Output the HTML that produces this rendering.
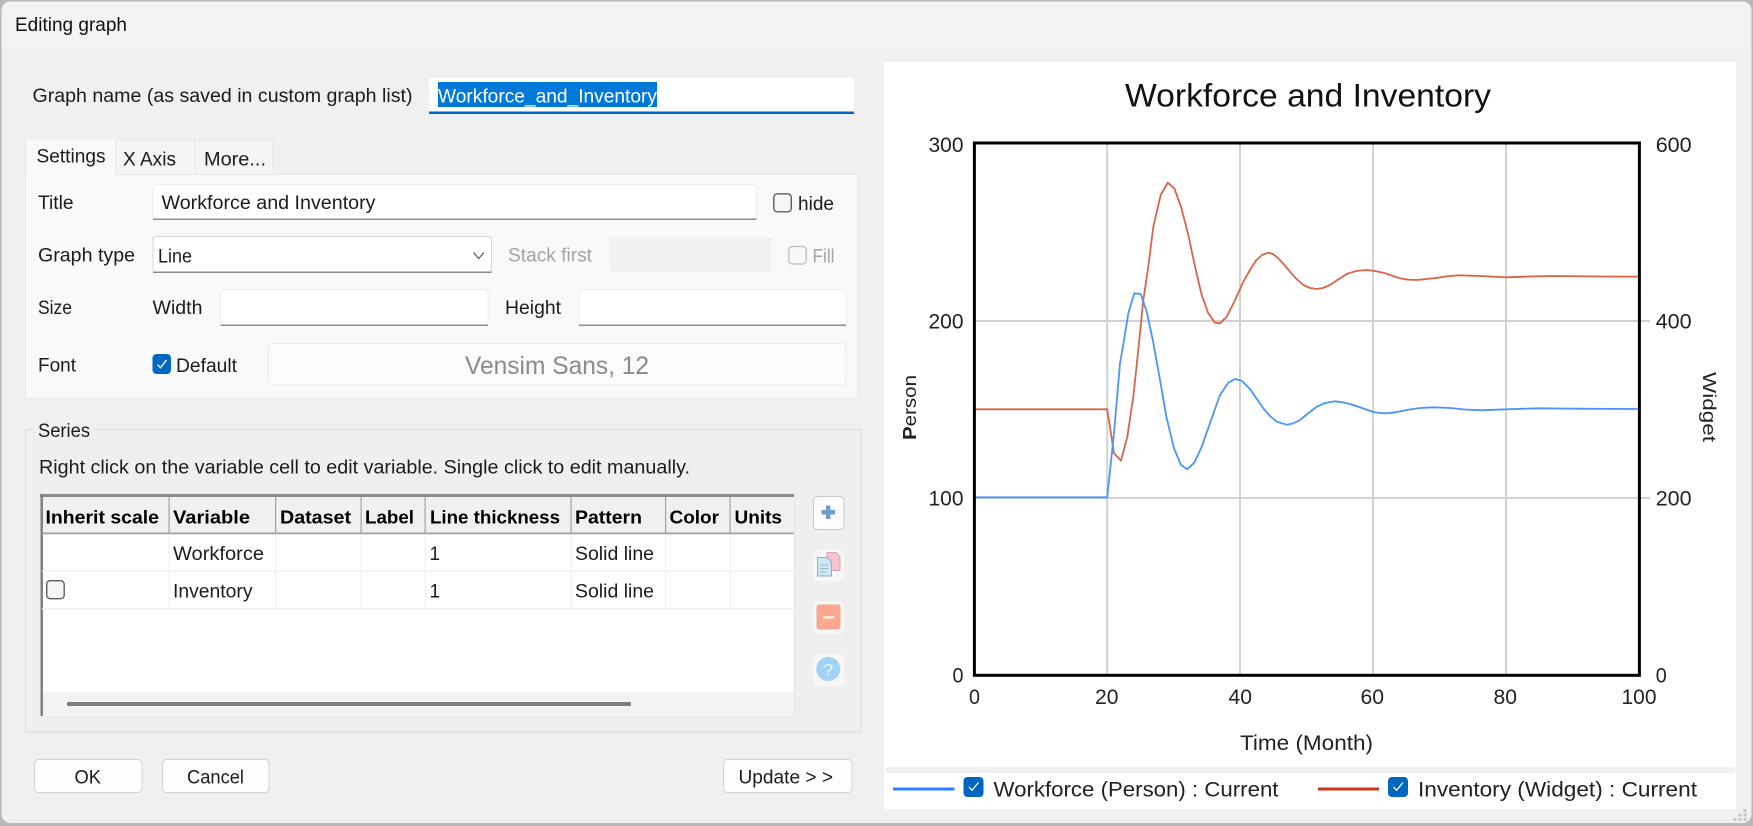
<!DOCTYPE html>
<html>
<head>
<meta charset="utf-8">
<title>Editing graph</title>
<style>
html,body{margin:0;padding:0;width:1753px;height:826px;overflow:hidden;background:#b9b9b9}
svg{display:block}
text{font-family:"Liberation Sans",sans-serif;font-size:19px;fill:#1c1c1c}
.h{font-weight:bold;fill:#000;font-size:18.5px}
.d{fill:#a3a3a3}
.c{font-size:21.5px;fill:#222}
</style>
</head>
<body>
<svg xmlns="http://www.w3.org/2000/svg" width="1753" height="826" viewBox="0 0 1753 826">
<rect x="1.500" y="1.500" width="1750" height="821.500" rx="9" fill="#f0f0f0"/>
<path d="M1.500 48V10.500a9 9 0 0 1 9-9H1742.500a9 9 0 0 1 9 9V48Z" fill="#f3f3f3"/>
<text x="15" y="31" textLength="112" lengthAdjust="spacingAndGlyphs" style="fill:#111">Editing graph</text>

<text x="32.500" y="102" textLength="380" lengthAdjust="spacingAndGlyphs">Graph name (as saved in custom graph list)</text>
<rect x="429" y="78" width="425" height="36" fill="#fff"/>
<rect x="429" y="111.500" width="425" height="2.500" fill="#0067c0"/>
<rect x="438" y="82" width="219" height="25" fill="#0078d7"/>
<text x="438" y="102.500" textLength="219" lengthAdjust="spacingAndGlyphs" style="fill:#fff">Workforce_and_Inventory</text>

<rect x="116" y="140" width="79" height="35" fill="#f4f4f4" stroke="#e9e9e9"/>
<rect x="195" y="140" width="78" height="35" fill="#f4f4f4" stroke="#e9e9e9"/>
<rect x="25.500" y="174.500" width="832" height="224" fill="#f9f9f9" stroke="#e8e8e8"/>
<rect x="25" y="138" width="91" height="37" fill="#f9f9f9"/>
<path d="M25.500 175V138.500H115.500V174" fill="none" stroke="#ececec"/>
<text x="36.500" y="162.500" textLength="69" lengthAdjust="spacingAndGlyphs">Settings</text>
<text x="123" y="165.500" textLength="53" lengthAdjust="spacingAndGlyphs">X Axis</text>
<text x="204" y="165.500" textLength="62" lengthAdjust="spacingAndGlyphs">More...</text>

<text x="38" y="209" textLength="35.500" lengthAdjust="spacingAndGlyphs">Title</text>
<rect x="153" y="184.500" width="603.500" height="35" rx="3" fill="#fff" stroke="#ececec"/>
<rect x="153" y="218.500" width="603.500" height="1.500" fill="#8d8d8d"/>
<text x="161.500" y="209" textLength="214" lengthAdjust="spacingAndGlyphs">Workforce and Inventory</text>
<rect x="773.800" y="193.800" width="17.500" height="18" rx="3.500" fill="#f6f6f6" stroke="#5e5e5e" stroke-width="1.400"/>
<text x="798" y="210" textLength="36" lengthAdjust="spacingAndGlyphs">hide</text>

<text x="38" y="261.500" textLength="97" lengthAdjust="spacingAndGlyphs">Graph type</text>
<rect x="153" y="236.500" width="338.500" height="36" rx="3" fill="#fff" stroke="#d6d6d6"/>
<rect x="153" y="271.500" width="338.500" height="1.500" fill="#8d8d8d"/>
<text x="158" y="262.500" textLength="34" lengthAdjust="spacingAndGlyphs">Line</text>
<path d="M473.500 252.500L478.700 258.500L484 252.500" fill="none" stroke="#555" stroke-width="1.200"/>
<text class="d" x="508" y="261.500" textLength="84" lengthAdjust="spacingAndGlyphs">Stack first</text>
<rect x="609.500" y="236.500" width="162.500" height="36" rx="3" fill="#f0f0f0" stroke="#f6f6f6" stroke-width="2"/>
<rect x="788.800" y="246.500" width="17.500" height="17.500" rx="3.500" fill="#f8f8f8" stroke="#bcbcbc" stroke-width="1.300"/>
<text class="d" x="812.500" y="262.500" textLength="22" lengthAdjust="spacingAndGlyphs">Fill</text>

<text x="38" y="314" textLength="34" lengthAdjust="spacingAndGlyphs">Size</text>
<text x="152.500" y="314" textLength="50" lengthAdjust="spacingAndGlyphs">Width</text>
<rect x="220.500" y="289.500" width="267.500" height="36" rx="3" fill="#fff" stroke="#ececec"/>
<rect x="220.500" y="324.500" width="267.500" height="1.500" fill="#8d8d8d"/>
<text x="505" y="314" textLength="56" lengthAdjust="spacingAndGlyphs">Height</text>
<rect x="579" y="289.500" width="267" height="36" rx="3" fill="#fff" stroke="#ececec"/>
<rect x="579" y="324.500" width="267" height="1.500" fill="#8d8d8d"/>

<text x="38" y="371.500" textLength="38" lengthAdjust="spacingAndGlyphs">Font</text>
<rect x="152.500" y="354" width="18.500" height="20" rx="4" fill="#0067c0"/>
<path d="M157.500 364.500L160.500 367.800L166.500 360" fill="none" stroke="#fff" stroke-width="1.300"/>
<text x="176" y="372" textLength="61" lengthAdjust="spacingAndGlyphs">Default</text>
<rect x="268.500" y="343.500" width="577.500" height="41.500" rx="4" fill="#fbfbfb" stroke="#ebebeb"/>
<text x="465" y="374" textLength="184" lengthAdjust="spacingAndGlyphs" style="font-size:25px;fill:#8a8a8a">Vensim Sans, 12</text>

<rect x="25.500" y="429.500" width="835.500" height="302.500" fill="#efefef" stroke="#dcdcdc"/>
<rect x="34" y="425" width="60" height="10" fill="#f0f0f0"/>
<text x="38" y="437" textLength="52" lengthAdjust="spacingAndGlyphs">Series</text>
<text x="39" y="473.500" textLength="651" lengthAdjust="spacingAndGlyphs">Right click on the variable cell to edit variable. Single click to edit manually.</text>

<rect x="40" y="494" width="754.500" height="223" fill="#f3f3f3" stroke="#e6e6e6"/>
<rect x="42" y="497" width="751.500" height="37" fill="#f0f0f0"/>
<rect x="42" y="534" width="751.500" height="158" fill="#fff"/>
<rect x="40" y="494" width="754" height="3" fill="#8b8b8b"/>
<rect x="40.500" y="494" width="2.500" height="222" fill="#828282"/>
<rect x="42" y="532.500" width="751.500" height="1.800" fill="#a2a2a2"/>
<g fill="#a2a2a2">
<rect x="168.500" y="497" width="1.200" height="36"/><rect x="275" y="497" width="1.200" height="36"/><rect x="360.500" y="497" width="1.200" height="36"/><rect x="424.500" y="497" width="1.200" height="36"/><rect x="570.500" y="497" width="1.200" height="36"/><rect x="665" y="497" width="1.200" height="36"/><rect x="729.500" y="497" width="1.200" height="36"/>
</g>
<g fill="#f0f0f0">
<rect x="168.500" y="534" width="1.200" height="75"/><rect x="275" y="534" width="1.200" height="75"/><rect x="360.500" y="534" width="1.200" height="75"/><rect x="424.500" y="534" width="1.200" height="75"/><rect x="570.500" y="534" width="1.200" height="75"/><rect x="665" y="534" width="1.200" height="75"/><rect x="729.500" y="534" width="1.200" height="75"/>
<rect x="42" y="570.500" width="751.500" height="1.500"/><rect x="42" y="608" width="751.500" height="1.500"/>
</g>
<text class="h" x="45.500" y="523.500" textLength="113.500" lengthAdjust="spacingAndGlyphs">Inherit scale</text>
<text class="h" x="173" y="523.500" textLength="77" lengthAdjust="spacingAndGlyphs">Variable</text>
<text class="h" x="280" y="523.500" textLength="71" lengthAdjust="spacingAndGlyphs">Dataset</text>
<text class="h" x="365" y="523.500" textLength="49" lengthAdjust="spacingAndGlyphs">Label</text>
<text class="h" x="430" y="523.500" textLength="130" lengthAdjust="spacingAndGlyphs">Line thickness</text>
<text class="h" x="575" y="523.500" textLength="67" lengthAdjust="spacingAndGlyphs">Pattern</text>
<text class="h" x="669.500" y="523.500" textLength="49.500" lengthAdjust="spacingAndGlyphs">Color</text>
<text class="h" x="734.500" y="523.500" textLength="47.500" lengthAdjust="spacingAndGlyphs">Units</text>
<text x="173" y="560" textLength="91" lengthAdjust="spacingAndGlyphs">Workforce</text>
<text x="429.500" y="560">1</text>
<text x="575" y="560" textLength="79" lengthAdjust="spacingAndGlyphs">Solid line</text>
<rect x="46.700" y="580.700" width="17.500" height="18" rx="3.500" fill="#f6f6f6" stroke="#5e5e5e" stroke-width="1.400"/>
<text x="173" y="597.500" textLength="79.500" lengthAdjust="spacingAndGlyphs">Inventory</text>
<text x="429.500" y="597.500">1</text>
<text x="575" y="597.500" textLength="79" lengthAdjust="spacingAndGlyphs">Solid line</text>
<rect x="67" y="702" width="564" height="4" rx="1" fill="#7d7d7d"/>

<rect x="813.500" y="496.500" width="30.500" height="33" rx="4" fill="#fdfdfd" stroke="#c9c9c9"/>
<path d="M828.200 505.500V519M821.500 512.300H835" fill="none" stroke="#6f9dd3" stroke-width="4.500"/>
<rect x="813.500" y="549.500" width="30.500" height="32" rx="4" fill="#f7f7f7"/>
<path d="M827 552.500H836L840 557V570.500H827Z" fill="#f7c3cf" stroke="#d9a5b3"/>
<path d="M817.500 557.500H827L831.500 562V576H817.500Z" fill="#c9e8f3" stroke="#8fb2bf"/>
<path d="M820 565H828M820 568.500H828M820 572H826" stroke="#9dbcc9" stroke-width="1"/>
<rect x="813.500" y="602" width="30.500" height="31.500" rx="4" fill="#f7f7f7"/>
<rect x="817" y="605" width="23" height="24" rx="2" fill="#ffa78c" stroke="#e9a995"/>
<rect x="823" y="616" width="11.500" height="2.800" fill="#ffe6dc"/>
<rect x="813.500" y="654" width="30.500" height="32" rx="4" fill="#f7f7f7"/>
<circle cx="828.300" cy="669" r="12" fill="#a2d2f3"/>
<text x="828.300" y="675.500" text-anchor="middle" style="font-size:17px;fill:#eef8ff">?</text>

<rect x="34.500" y="759.500" width="107.500" height="33" rx="4" fill="#fdfdfd" stroke="#d2d2d2"/>
<rect x="162.500" y="759.500" width="106.500" height="33" rx="4" fill="#fdfdfd" stroke="#d2d2d2"/>
<rect x="723.500" y="759.500" width="128.500" height="33" rx="4" fill="#fdfdfd" stroke="#d2d2d2"/>
<text x="74.500" y="783.500" textLength="26.500" lengthAdjust="spacingAndGlyphs">OK</text>
<text x="187" y="783.500" textLength="57" lengthAdjust="spacingAndGlyphs">Cancel</text>
<text x="738.500" y="783.500" textLength="94.500" lengthAdjust="spacingAndGlyphs">Update &gt; &gt;</text>

<rect x="884" y="62" width="852" height="747" fill="#fff"/>
<rect x="885" y="767" width="850" height="6" fill="#f0f0f0"/>
<text x="1125" y="106.700" textLength="366" lengthAdjust="spacingAndGlyphs" style="font-size:32.500px;fill:#111">Workforce and Inventory</text>

<g stroke="#d2d2d2" stroke-width="2" fill="none">
<path d="M1107.200 143V675M1240 143V675M1373 143V675M1506 143V675"/>
<path d="M974 321H1650M974 498H1650"/>
</g>
<polyline fill="none" stroke="#d9644a" stroke-width="1.800" stroke-linejoin="round" points="974.500,409.300 1107.200,409.300 1114,453.300 1121,460.700 1127.300,436.700 1133.300,396.700 1136.700,365 1139.300,340 1143.300,300 1148.300,266.700 1153.300,226.700 1160.700,195 1167.700,182.700 1174.300,188.300 1181,206.700 1188.300,235 1195,266.700 1201.700,295 1208.300,313.300 1215,322.700 1220,323.300 1226.700,316.700 1234.300,301.700 1243.300,281.700 1250,270 1256,260.500 1262,255 1268.300,252.700 1273,254 1278.300,258.300 1284,264.500 1290,271.700 1296,278.500 1303.300,285 1310,288 1316.700,289 1323,288 1330,285 1338,279.500 1346.700,274 1356,271 1366.700,270 1375,271 1383.300,272.700 1400,278.300 1408,279.600 1416.700,280 1433.300,278.300 1450,276 1459,275.300 1480,276 1506.400,277.300 1530,276.500 1553.700,276 1600,276.500 1640,276.700"/>
<polyline fill="none" stroke="#4a94fb" stroke-width="1.800" stroke-linejoin="round" points="974.500,497.300 1107.200,497.300 1114,433.300 1120,363.300 1124,340 1128.300,313.300 1134.300,293.300 1140.700,294 1146.700,311.700 1152.800,340 1160,380 1166.700,418.300 1174,448.300 1181,465 1187.300,469.300 1194.300,462.700 1201.700,446.700 1211.700,418.300 1220,395 1228.300,382.700 1235,379 1241.700,380.700 1250,389 1263.300,408.300 1270,416 1276.700,421.700 1286.700,424.700 1293,423.500 1300,420 1308,413.500 1316.700,406.700 1325,403 1335,401.300 1344,402.500 1353.300,405 1373.300,412 1380,413 1386.700,413.300 1396,412.200 1406.700,410 1420,408 1434,407.300 1450,408 1465,409.500 1481,410.300 1510,409.200 1537,408.300 1590,408.800 1640,409"/>
<rect x="974.400" y="143" width="665" height="532.300" fill="none" stroke="#000" stroke-width="3"/>

<g class="n">
<text class="c" x="928.500" y="152" textLength="35" lengthAdjust="spacingAndGlyphs">300</text>
<text class="c" x="928.500" y="328.500" textLength="35" lengthAdjust="spacingAndGlyphs">200</text>
<text class="c" x="928.500" y="505.700" textLength="35" lengthAdjust="spacingAndGlyphs">100</text>
<text class="c" x="952.500" y="682.500" textLength="11" lengthAdjust="spacingAndGlyphs">0</text>
<text class="c" x="1655.700" y="152" textLength="36" lengthAdjust="spacingAndGlyphs">600</text>
<text class="c" x="1655.700" y="328.500" textLength="36" lengthAdjust="spacingAndGlyphs">400</text>
<text class="c" x="1655.700" y="505.700" textLength="36" lengthAdjust="spacingAndGlyphs">200</text>
<text class="c" x="1655.700" y="682.500" textLength="11" lengthAdjust="spacingAndGlyphs">0</text>
<text class="c" x="969" y="704" textLength="11" lengthAdjust="spacingAndGlyphs">0</text>
<text class="c" x="1095" y="704" textLength="23.500" lengthAdjust="spacingAndGlyphs">20</text>
<text class="c" x="1228.500" y="704" textLength="23.500" lengthAdjust="spacingAndGlyphs">40</text>
<text class="c" x="1360.500" y="704" textLength="23.500" lengthAdjust="spacingAndGlyphs">60</text>
<text class="c" x="1493.500" y="704" textLength="23.500" lengthAdjust="spacingAndGlyphs">80</text>
<text class="c" x="1621.500" y="704" textLength="35" lengthAdjust="spacingAndGlyphs">100</text>
</g>
<text class="c" x="1240" y="750" textLength="133" lengthAdjust="spacingAndGlyphs">Time (Month)</text>
<text transform="translate(916,440) rotate(-90)" x="0" y="0" textLength="65" lengthAdjust="spacingAndGlyphs" style="font-size:18px;fill:#222"><tspan font-weight="bold">P</tspan>erson</text>
<text transform="translate(1703,372) rotate(90)" x="0" y="0" textLength="70" lengthAdjust="spacingAndGlyphs" style="font-size:18px;fill:#222">Widget</text>

<rect x="893" y="787.500" width="61.500" height="3" fill="#2a80ff"/>
<rect x="963.500" y="777" width="20" height="20" rx="4" fill="#0067c0"/>
<path d="M969 787L972 790.300L978.500 782.500" fill="none" stroke="#fff" stroke-width="1.300"/>
<text class="c" x="993.500" y="796.700" textLength="285" lengthAdjust="spacingAndGlyphs">Workforce (Person) : Current</text>
<rect x="1318" y="787.500" width="61" height="3" fill="#c8361a"/>
<rect x="1388" y="777" width="20" height="20" rx="4" fill="#0067c0"/>
<path d="M1393.500 787L1396.500 790.300L1403 782.500" fill="none" stroke="#fff" stroke-width="1.300"/>
<text class="c" x="1418" y="796.700" textLength="279" lengthAdjust="spacingAndGlyphs">Inventory (Widget) : Current</text>

<g fill="#c4c4c4">
<rect x="1743.500" y="809" width="3" height="3"/><rect x="1738.500" y="813.500" width="3" height="3"/><rect x="1743.500" y="813.500" width="3" height="3"/><rect x="1733.500" y="818" width="3" height="3"/><rect x="1738.500" y="818" width="3" height="3"/><rect x="1743.500" y="818" width="3" height="3"/>
</g>
</svg>
</body>
</html>
